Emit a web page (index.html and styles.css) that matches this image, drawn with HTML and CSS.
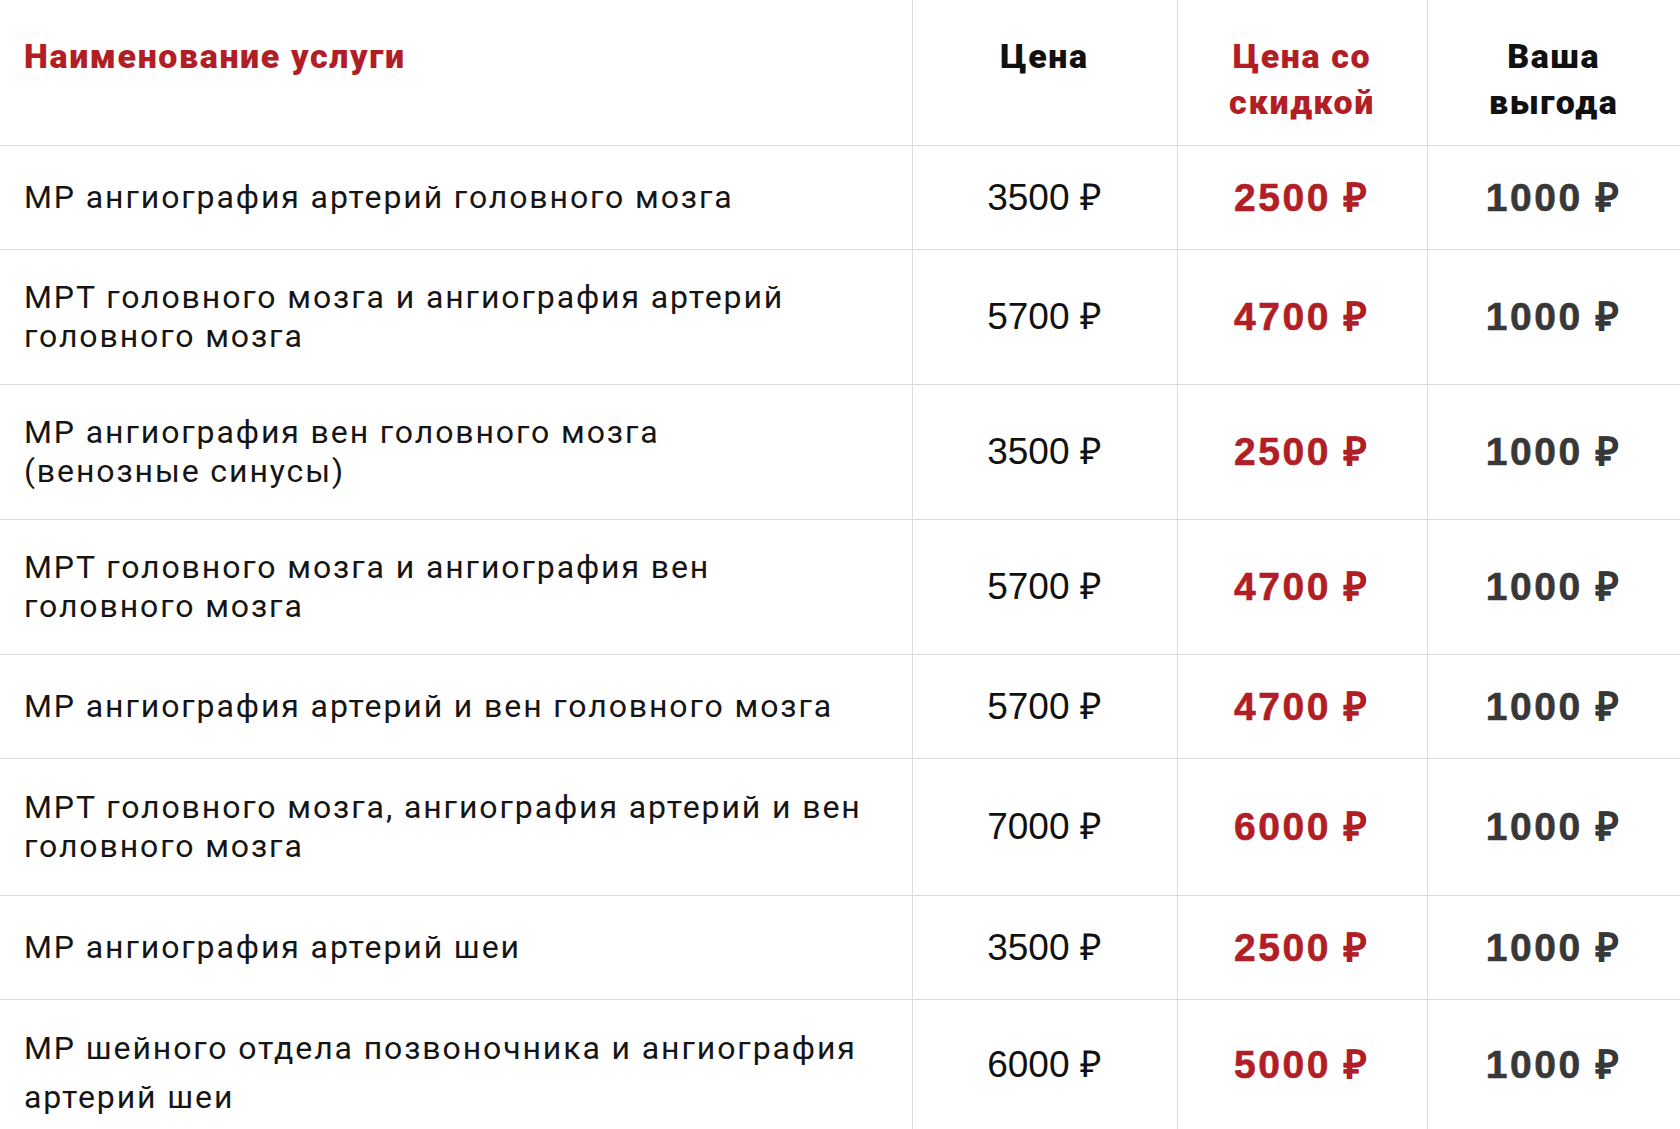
FILE: index.html
```html
<!DOCTYPE html>
<html lang="ru">
<head>
<meta charset="utf-8">
<title>Цены</title>
<link rel="stylesheet" href="styles.css">
</head>
<body>
<table class="prices">
  <colgroup>
    <col class="c-name"><col class="c-price"><col class="c-disc"><col class="c-save">
  </colgroup>
  <thead>
    <tr>
      <th class="h-name">Наименование услуги</th>
      <th class="h-price">Цена</th>
      <th class="h-disc">Цена со<br>скидкой</th>
      <th class="h-save">Ваша<br>выгода</th>
    </tr>
  </thead>
  <tbody>
    <tr><td class="name">МР ангиография артерий головного мозга</td><td class="price">3500 ₽</td><td class="disc">2500 ₽</td><td class="save">1000 ₽</td></tr>
    <tr><td class="name">МРТ головного мозга и ангиография артерий<br>головного мозга</td><td class="price">5700 ₽</td><td class="disc">4700 ₽</td><td class="save">1000 ₽</td></tr>
    <tr><td class="name">МР ангиография вен головного мозга<br>(венозные синусы)</td><td class="price">3500 ₽</td><td class="disc">2500 ₽</td><td class="save">1000 ₽</td></tr>
    <tr><td class="name">МРТ головного мозга и ангиография вен<br>головного мозга</td><td class="price">5700 ₽</td><td class="disc">4700 ₽</td><td class="save">1000 ₽</td></tr>
    <tr><td class="name">МР ангиография артерий и вен головного мозга</td><td class="price">5700 ₽</td><td class="disc">4700 ₽</td><td class="save">1000 ₽</td></tr>
    <tr class="tall"><td class="name">МРТ головного мозга, ангиография артерий и вен<br>головного мозга</td><td class="price">7000 ₽</td><td class="disc">6000 ₽</td><td class="save">1000 ₽</td></tr>
    <tr><td class="name">МР ангиография артерий шеи</td><td class="price">3500 ₽</td><td class="disc">2500 ₽</td><td class="save">1000 ₽</td></tr>
    <tr class="last"><td class="name">МР шейного отдела позвоночника и ангиография<br>артерий шеи</td><td class="price">6000 ₽</td><td class="disc">5000 ₽</td><td class="save">1000 ₽</td></tr>
  </tbody>
</table>
</body>
</html>
```
FILE: styles.css
```css
html, body {
  margin: 0;
  padding: 0;
  background: #ffffff;
}
body {
  width: 1680px;
  height: 1129px;
  overflow: hidden;
}
.prices {
  border-collapse: collapse;
  table-layout: fixed;
  width: 1680px;
}
.c-name { width: 912px; }
.c-price { width: 265px; }
.c-disc { width: 250px; }
.c-save { width: 253px; }

.prices th, .prices td {
  border-bottom: 1px solid #dcdcdc;
  border-left: 1px solid #dcdcdc;
  vertical-align: middle;
}
.prices th:first-child, .prices td:first-child {
  border-left: none;
}
.prices th {
  height: 145px;
  box-sizing: border-box;
  padding: 33px 10px 0;
  vertical-align: top;
  font-family: Roboto, "Liberation Sans", sans-serif;
  font-weight: 900;
  font-size: 34px;
  line-height: 46px;
  letter-spacing: 1.6px;
  text-align: center;
  color: #111111;
}
.prices th.h-name {
  text-align: left;
  padding-left: 24px;
  color: #b21e25;
}
.prices th.h-disc { color: #b21e25; }

.prices td {
  padding: 28px 24px;
}
.prices tr.tall td {
  padding-top: 29px;
  padding-bottom: 29px;
}
.prices td.name {
  font-family: Roboto, "Liberation Sans", sans-serif;
  font-size: 32px;
  line-height: 39px;
  letter-spacing: 1.9px;
  color: #151515;
}
.prices td.price, .prices td.disc, .prices td.save {
  font-family: "Liberation Sans", Arial, sans-serif;
  font-size: 37px;
  line-height: 47px;
  text-align: center;
  padding-left: 0;
  padding-right: 0;
}
.prices td.price {
  color: #111111;
}
.prices td.disc {
  font-weight: 700;
  font-size: 39px;
  letter-spacing: 2.6px;
  -webkit-text-stroke: 0.6px currentColor;
  color: #b21e25;
}
.prices td.save {
  font-weight: 700;
  font-size: 39px;
  letter-spacing: 2.6px;
  -webkit-text-stroke: 0.6px currentColor;
  color: #383838;
}
.prices tr.last td.name {
  padding: 24px 24px 8px;
  line-height: 49px;
}
```
